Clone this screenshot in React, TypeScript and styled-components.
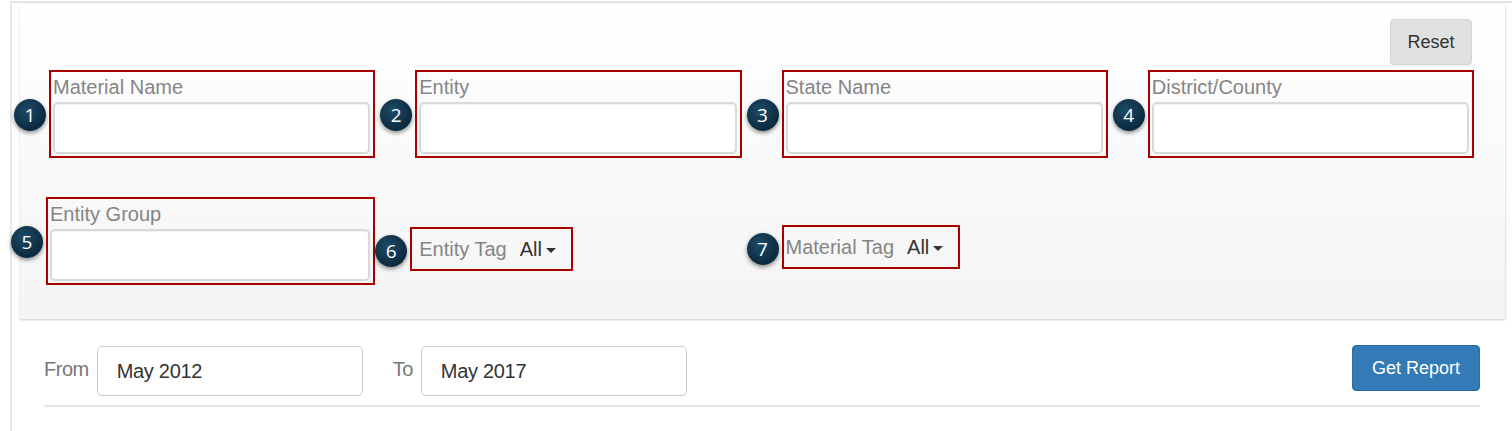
import styled, {createGlobalStyle} from "styled-components";

const GlobalStyle = createGlobalStyle`
  html, body {
    margin: 0;
    padding: 0;
    background: #ffffff;
    font-family: 'Liberation Sans', Arial, Helvetica, sans-serif;
  }
`

const Frame = styled('div')`
  margin: 1px 0 0 10px;
  min-height: 430px;
  border-top: 2px solid #e4e4e4;
  border-left: 2px solid #e8e8e8;
  box-sizing: border-box;
`

const FilterPanel = styled('section')`
  margin: 2px 7px 0 8px;
  padding: 14px 31px 34px 29px;
  background: linear-gradient(#ffffff, #f4f4f4);
  box-shadow: 0 1px 2px rgba(0, 0, 0, 0.18), 1px 0 2px rgba(0, 0, 0, 0.06);
`

const TopBar = styled('div')`
  display: flex;
  justify-content: flex-end;
  padding-right: 2px;
  margin-bottom: 5px;
`

const ResetButton = styled('button')`
  width: 82px;
  height: 46px;
  border: 1px solid #d4d4d4;
  border-radius: 4px;
  background: #e1e1e1;
  color: #333333;
  font-family: inherit;
  font-size: 18px;
  cursor: pointer;
`

const FieldGrid = styled('div')`
  display: grid;
  grid-template-columns: repeat(4, 1fr);
  column-gap: 40px;
  row-gap: 39px;
`

const Annotated = styled('div')<{$shift?: number; $top?: number; $pad?: number; $inline?: boolean}>`
  position: relative;
  border: 2px solid #a80000;
  margin-left: ${p => p.$shift ?? 0}px;
  margin-top: ${p => p.$top ?? 0}px;
  align-self: start;
  ${p => p.$inline ? `
    justify-self: start;
    display: flex;
    align-items: center;
    height: 40px;
    padding: 0 15px 0 ${p.$pad ?? 7}px;
  ` : `
    padding: 0 3px 2px 2px;
  `}
`

const Badge = styled('span')<{$centered?: boolean}>`
  position: absolute;
  left: -37px;
  top: ${p => p.$centered ? 'calc(50% - 14px)' : '27px'};
  width: 32px;
  height: 32px;
  border-radius: 50%;
  background: radial-gradient(circle at 40% 35%, #1d4a66, #0b2a3e 70%);
  box-shadow: 0 2px 4px rgba(0, 0, 0, 0.45);
  color: #ffffff;
  font-family: 'Open Sans', 'Noto Sans', sans-serif;
  font-size: 19px;
  line-height: 32px;
  text-align: center;
`

const FieldLabel = styled('div')`
  height: 28px;
  line-height: 30px;
  margin-bottom: 2px;
  font-size: 20px;
  color: #858585;
  white-space: nowrap;
`

const FieldInput = styled('input')`
  display: block;
  width: 100%;
  height: 52px;
  box-sizing: border-box;
  border: 2px solid #d9d9d9;
  border-radius: 5px;
  background: #ffffff;
  box-shadow: inset 0 1px 1px rgba(0, 0, 0, 0.06);
  font-family: inherit;
  font-size: 18px;
  padding: 0 10px;

  &:focus {
    outline: none;
  }
`

const TagLabel = styled('span')`
  font-size: 20px;
  color: #858585;
  white-space: nowrap;
`

const TagValue = styled('span')`
  margin-left: 13px;
  font-size: 20px;
  color: #333333;
  display: flex;
  align-items: center;
`

const Caret = styled('span')`
  display: inline-block;
  margin-left: 4px;
  margin-top: 2px;
  width: 0;
  height: 0;
  border-top: 5px solid #333333;
  border-left: 5px solid transparent;
  border-right: 5px solid transparent;
`

const ReportBar = styled('div')`
  padding: 27px 32px 0 32px;
`

const DateRow = styled('div')`
  display: flex;
  align-items: center;
`

const DateLabel = styled('span')<{$gap?: number}>`
  margin-left: ${p => p.$gap ?? 0}px;
  margin-right: 8px;
  margin-top: -4px;
  font-size: 20px;
  color: #777777;
  letter-spacing: -0.5px;
`

const DateInput = styled('input')`
  width: 266px;
  height: 50px;
  box-sizing: border-box;
  border: 1px solid #cccccc;
  border-radius: 5px;
  padding: 0 19px;
  font-family: inherit;
  font-size: 20px;
  color: #333333;
  letter-spacing: -0.3px;

  &:focus {
    outline: none;
  }
`

const ReportButton = styled('button')`
  margin-left: auto;
  align-self: flex-start;
  margin-top: -1px;
  width: 128px;
  height: 46px;
  border: 1px solid #2e6da4;
  border-radius: 4px;
  background: #337ab7;
  color: #ffffff;
  font-family: inherit;
  font-size: 18px;
  cursor: pointer;
`

const Divider = styled('div')`
  margin-top: 9px;
  height: 2px;
  background: #e6e6e6;
`

const fields = ['Material Name', 'Entity', 'State Name', 'District/County'];

export default function App() {
    return (
        <>
            <GlobalStyle/>
            <Frame>
                <FilterPanel>
                    <TopBar>
                        <ResetButton type={'button'}>Reset</ResetButton>
                    </TopBar>
                    <FieldGrid>
                        {fields.map((name, i) => (
                            <Annotated key={name}>
                                <Badge>{i + 1}</Badge>
                                <FieldLabel>{name}</FieldLabel>
                                <FieldInput type={'text'}/>
                            </Annotated>
                        ))}
                        <Annotated $shift={-3}>
                            <Badge>5</Badge>
                            <FieldLabel>Entity Group</FieldLabel>
                            <FieldInput type={'text'}/>
                        </Annotated>
                        <Annotated $inline $shift={-5} $top={30} $pad={7}>
                            <Badge $centered>6</Badge>
                            <TagLabel>Entity Tag</TagLabel>
                            <TagValue>All<Caret/></TagValue>
                        </Annotated>
                        <Annotated $inline $top={28} $pad={2}>
                            <Badge $centered>7</Badge>
                            <TagLabel>Material Tag</TagLabel>
                            <TagValue>All<Caret/></TagValue>
                        </Annotated>
                    </FieldGrid>
                </FilterPanel>
                <ReportBar>
                    <DateRow>
                        <DateLabel>From</DateLabel>
                        <DateInput type={'text'} defaultValue={'May 2012'}/>
                        <DateLabel $gap={30}>To</DateLabel>
                        <DateInput type={'text'} defaultValue={'May 2017'}/>
                        <ReportButton type={'button'}>Get Report</ReportButton>
                    </DateRow>
                    <Divider/>
                </ReportBar>
            </Frame>
        </>
    )
}
